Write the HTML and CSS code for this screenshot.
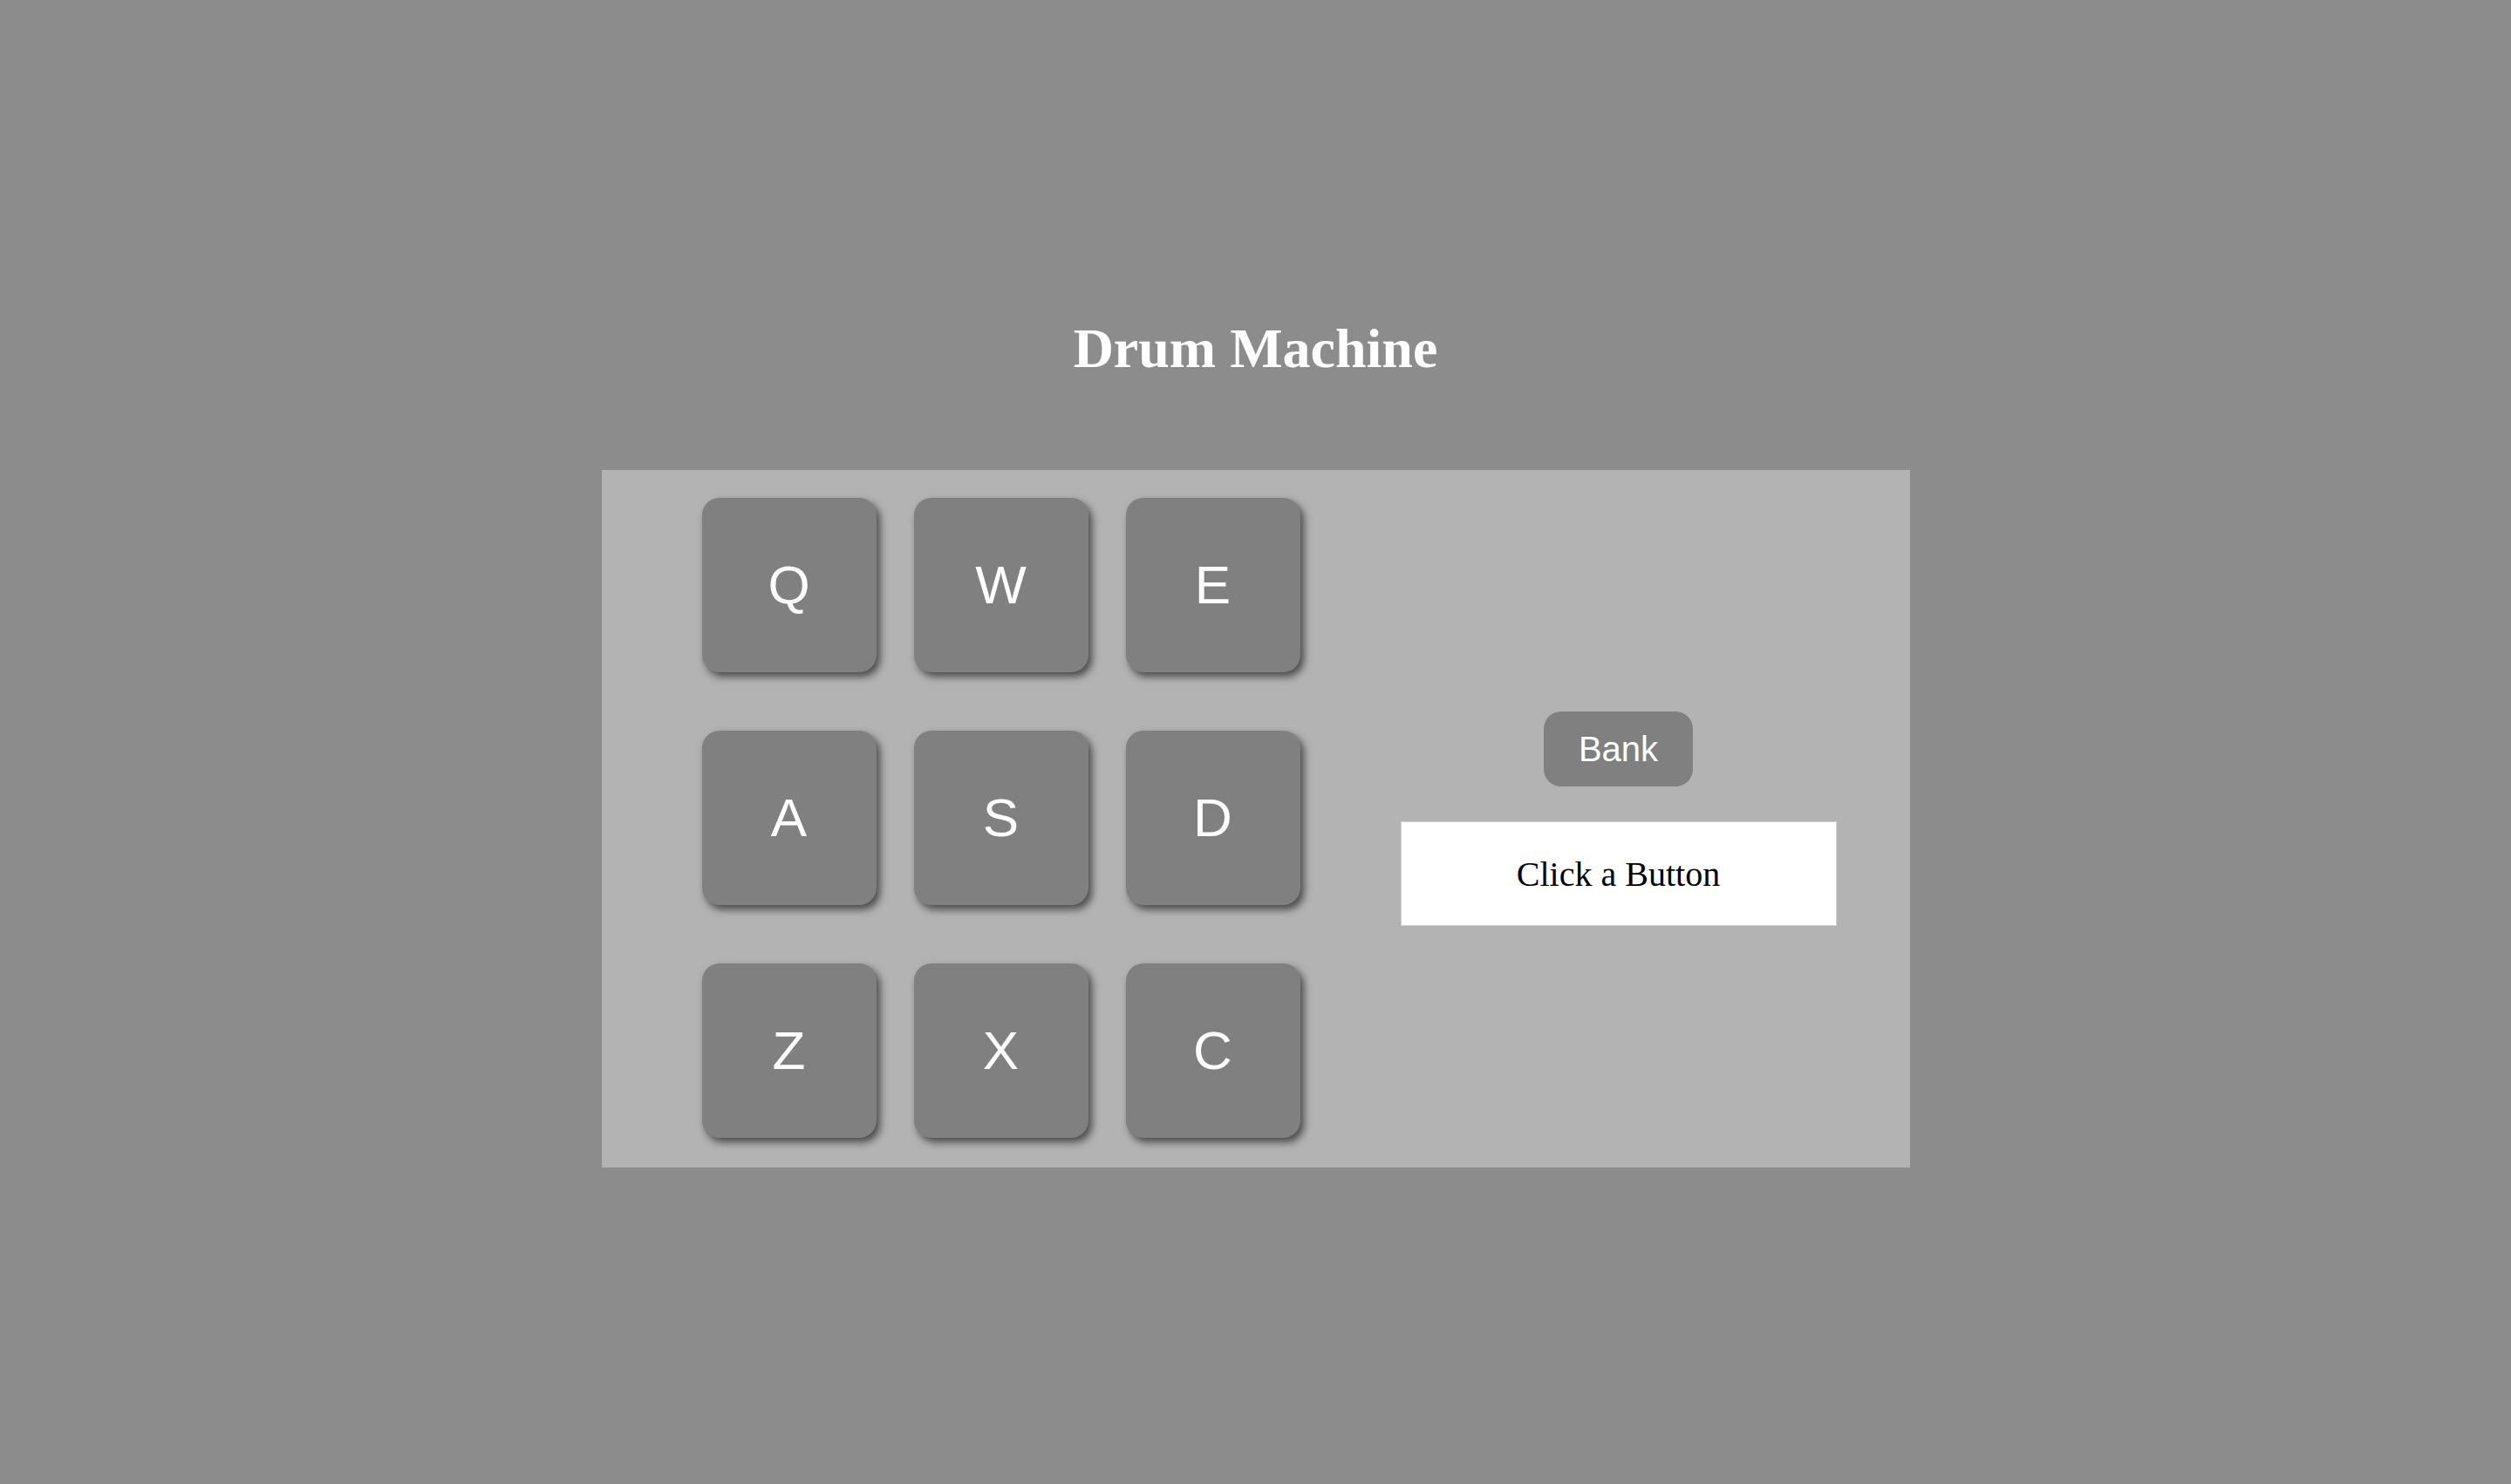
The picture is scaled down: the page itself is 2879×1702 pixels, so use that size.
FILE: index.html
```html
<!DOCTYPE html>
<html>
<head>
<meta charset="utf-8">
<title>Drum Machine</title>
<link rel="stylesheet" href="styles.css">
</head>
<body>
<main class="page">
  <h1 class="title">Drum Machine</h1>
  <div id="drum-machine" class="machine">
    <div class="pads">
      <button class="drum-pad">Q</button>
      <button class="drum-pad">W</button>
      <button class="drum-pad">E</button>
      <button class="drum-pad">A</button>
      <button class="drum-pad">S</button>
      <button class="drum-pad">D</button>
      <button class="drum-pad">Z</button>
      <button class="drum-pad">X</button>
      <button class="drum-pad">C</button>
    </div>
    <div class="controls">
      <button class="bank">Bank</button>
      <div id="display" class="display">Click a Button</div>
    </div>
  </div>
</main>
</body>
</html>
```

FILE: styles.css
```css
html, body {
  margin: 0;
  padding: 0;
}
body {
  background: #8c8c8c;
  min-height: 100vh;
}
.page {
  display: flex;
  flex-direction: column;
  align-items: center;
  padding-top: 368px;
}
.title {
  margin: 0 0 107px 0;
  font-family: "Liberation Serif", "Times New Roman", serif;
  font-weight: bold;
  font-size: 64px;
  line-height: 64px;
  color: #ffffff;
}
.machine {
  width: 1500px;
  height: 800px;
  background: #b3b3b3;
  display: flex;
  align-items: flex-start;
  box-sizing: border-box;
  padding-top: 32px;
}
.pads {
  margin-left: 115px;
  display: grid;
  grid-template-columns: repeat(3, 200px);
  grid-auto-rows: 200px;
  column-gap: 43px;
  row-gap: 67px;
}
.drum-pad {
  width: 200px;
  height: 200px;
  border: none;
  border-radius: 20px;
  background: #808080;
  color: #ffffff;
  font-family: "Liberation Sans", Arial, sans-serif;
  font-size: 62px;
  padding: 0 0 2px 0;
  box-shadow: 4px 5px 10px rgba(0, 0, 0, 0.6);
  cursor: pointer;
}
.controls {
  margin-left: 115px;
  width: 500px;
  align-self: center;
  display: flex;
  flex-direction: column;
  align-items: center;
  gap: 40px;
  margin-top: -32px;
}
.bank {
  width: 171px;
  height: 86px;
  border: none;
  border-radius: 20px;
  background: #808080;
  color: #ffffff;
  font-family: "Liberation Sans", Arial, sans-serif;
  font-size: 40px;
  padding: 0;
  cursor: pointer;
}
.display {
  width: 500px;
  height: 120px;
  box-sizing: border-box;
  background: #ffffff;
  border: 1px solid #d0d0d0;
  display: flex;
  align-items: center;
  justify-content: center;
  font-family: "Liberation Serif", "Times New Roman", serif;
  font-size: 40px;
  color: #000000;
}
```
